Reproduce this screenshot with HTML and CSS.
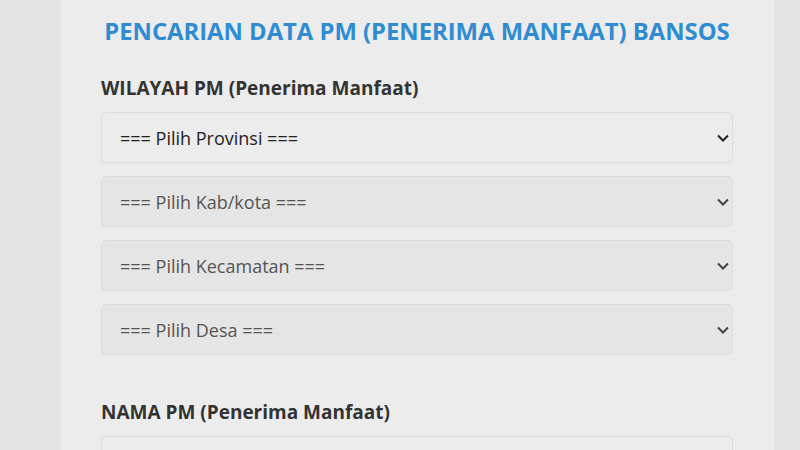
FILE: index.html
```html
<!DOCTYPE html>
<html>
<head>
  <title>Pencarian Data PM Bansos</title>
  <link rel="stylesheet" href="styles.css">
</head>
<body>
  <div class="container">
    <h1>PENCARIAN DATA PM (PENERIMA MANFAAT) BANSOS</h1>
    <form id="cariForm">
      <div class="form-group">
        <label>WILAYAH PM (Penerima Manfaat)</label>
        <div class="select-list">
          <div class="select-wrap">
            <select id="provinsi" name="provinsi">
              <option>=== Pilih Provinsi ===</option>
            </select>
            <svg class="chevron" width="12" height="8" viewBox="0 0 12 8"><path d="M1 1.5l5 5 5-5" fill="none" stroke="#222" stroke-width="2"/></svg>
          </div>
          <div class="select-wrap">
            <select id="kabkota" name="kabkota" disabled>
              <option>=== Pilih Kab/kota ===</option>
            </select>
            <svg class="chevron" width="12" height="8" viewBox="0 0 12 8"><path d="M1 1.5l5 5 5-5" fill="none" stroke="#444" stroke-width="2"/></svg>
          </div>
          <div class="select-wrap">
            <select id="kecamatan" name="kecamatan" disabled>
              <option>=== Pilih Kecamatan ===</option>
            </select>
            <svg class="chevron" width="12" height="8" viewBox="0 0 12 8"><path d="M1 1.5l5 5 5-5" fill="none" stroke="#444" stroke-width="2"/></svg>
          </div>
          <div class="select-wrap">
            <select id="desa" name="desa" disabled>
              <option>=== Pilih Desa ===</option>
            </select>
            <svg class="chevron" width="12" height="8" viewBox="0 0 12 8"><path d="M1 1.5l5 5 5-5" fill="none" stroke="#444" stroke-width="2"/></svg>
          </div>
        </div>
      </div>
      <div class="form-group">
        <label for="nama">NAMA PM (Penerima Manfaat)</label>
        <input type="text" id="nama" name="nama">
      </div>
    </form>
  </div>
</body>
</html>
```

FILE: styles.css
```css
/* halaman pencarian */
body {
  margin: 0;
  background-color: #e3e3e3;
  font-family: "Open Sans", "Noto Sans", sans-serif;
}

.container {
  width: 632px;
  margin-left: 61px;
  padding: 14px 41px 40px 40px;
  background-color: #ececec;
  min-height: 450px;
}

h1 {
  margin: 0 0 28px 0;
  text-align: center;
  color: #2f8bd2;
  font-size: 23.8px;
  font-weight: bold;
  line-height: 34px;
}

.form-group {
  margin-bottom: 45px;
}

label {
  display: block;
  font-weight: bold;
  font-size: 19px;
  color: #333;
  line-height: 24px;
  margin-bottom: 12px;
}

.select-list {
  display: flex;
  flex-direction: column;
  gap: 13px;
}

.select-wrap {
  position: relative;
}

select,
input[type="text"] {
  display: block;
  width: 100%;
  height: 51px;
  box-sizing: border-box;
  padding: 0 18px;
  border: 1px solid #dcdcdc;
  border-radius: 5px;
  background-color: #ececec;
  font-family: "Open Sans", "Noto Sans", sans-serif;
  font-size: 18px;
  color: #222;
  appearance: none;
  -webkit-appearance: none;
}

select:disabled {
  background-color: #e5e5e5;
  color: #555;
  opacity: 1;
}

.chevron {
  position: absolute;
  right: 4px;
  top: 22px;
  pointer-events: none;
}
```
